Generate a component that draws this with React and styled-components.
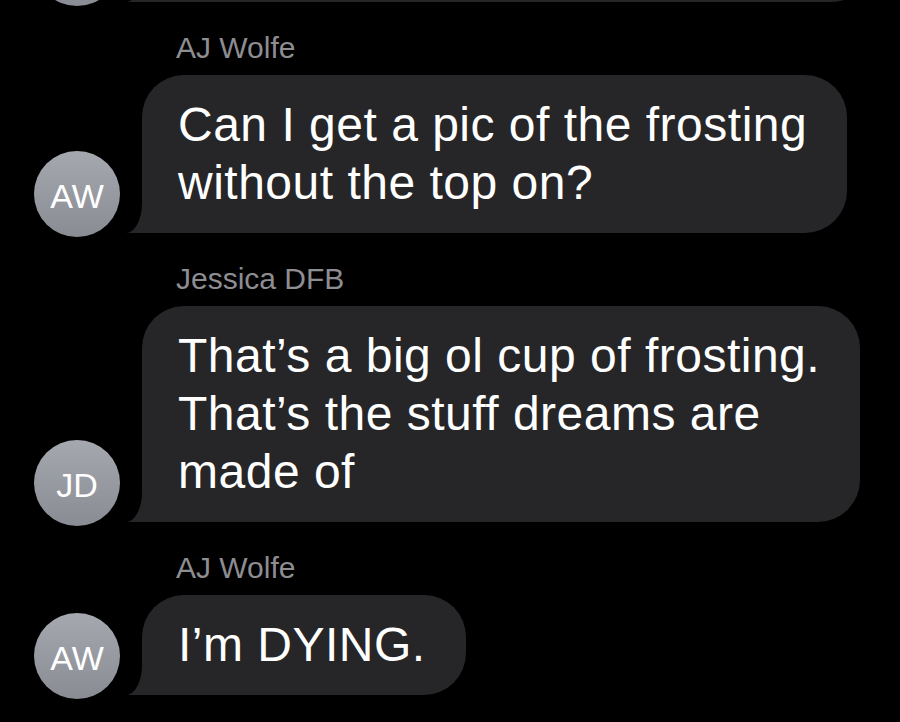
import React from "react";
import styled, { createGlobalStyle } from "styled-components";

const GlobalStyle = createGlobalStyle`
  html, body { margin: 0; padding: 0; background: #000; }
  body { font-family: "Liberation Sans", Arial, sans-serif; overflow: hidden; }
  #root { height: 722px; overflow: hidden; }
`;

const BUBBLE = "#262628";

const Feed = styled.div`
  display: flex;
  flex-direction: column;
  gap: 28px;
  padding-left: 34px;
  margin-top: -98px;
`;

const Group = styled.div`
  display: flex;
  flex-direction: column;
`;

const Name = styled.div`
  margin: 0 0 9px 142px;
  font-size: 30px;
  line-height: 36px;
  color: #8d8d92;
`;

const Row = styled.div`
  display: flex;
  align-items: flex-end;
  gap: 22px;
`;

const Avatar = styled.div`
  flex: none;
  width: 86px;
  height: 86px;
  margin-bottom: -4px;
  border-radius: 50%;
  background: linear-gradient(180deg, #a6a8b0 0%, #8a8c94 100%);
  color: #fff;
  font-size: 34px;
  display: flex;
  align-items: center;
  justify-content: center;
  padding-top: 4px;
  box-sizing: border-box;
`;

const Bubble = styled.div`
  position: relative;
  isolation: isolate;
  box-sizing: border-box;
  width: ${p => (p.$width ? `${p.$width}px` : "fit-content")};
  padding: 21px 40px 21px 36px;
  border-radius: 42px;
  background: ${BUBBLE};
  color: #fff;
  font-size: 48px;
  line-height: 58px;
  letter-spacing: 0.5px;
  white-space: nowrap;

  &::before {
    content: "";
    position: absolute;
    z-index: -1;
    left: -16px;
    bottom: 0;
    width: 60px;
    height: 44px;
    background: ${BUBBLE};
  }

  &::after {
    content: "";
    position: absolute;
    z-index: -1;
    left: -18px;
    bottom: 0;
    width: 18px;
    height: 48px;
    background: #000;
    border-bottom-right-radius: 16px 30px;
  }
`;

const Line = styled.span`
  display: block;
`;

const messages = [
  { initials: "", lines: ["\u00a0"], width: 731 },
  { name: "AJ Wolfe", initials: "AW", lines: ["Can I get a pic of the frosting", "without the top on?"] },
  { name: "Jessica DFB", initials: "JD", lines: ["That’s a big ol cup of frosting.", "That’s the stuff dreams are", "made of"] },
  { name: "AJ Wolfe", initials: "AW", lines: ["I’m DYING."] },
];

export default function App() {
  return (
    <>
      <GlobalStyle />
      <Feed>
        {messages.map((m, i) => (
          <Group key={i}>
            {m.name && <Name>{m.name}</Name>}
            <Row>
              <Avatar>{m.initials}</Avatar>
              <Bubble $width={m.width}>
                {m.lines.map((l, j) => <Line key={j}>{l}</Line>)}
              </Bubble>
            </Row>
          </Group>
        ))}
      </Feed>
    </>
  );
}
